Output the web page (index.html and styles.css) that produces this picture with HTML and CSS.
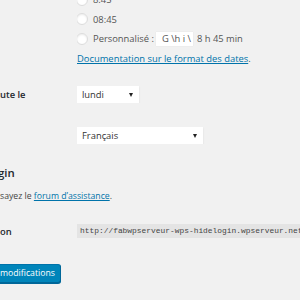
FILE: index.html
```html
<!DOCTYPE html>
<html lang="fr">
<head>
<meta charset="utf-8">
<link rel="stylesheet" href="styles.css">
</head>
<body>
<div class="page">
  <div class="row radios">
    <div class="label"></div>
    <div class="field">
      <div class="radio-line"><span class="radio"></span><span>8:45</span></div>
      <div class="radio-line"><span class="radio"></span><span>08:45</span></div>
      <div class="radio-line"><span class="radio"></span><span>Personnalisé :</span><span class="custom">G \h i \</span><span>8 h 45 min</span></div>
      <div class="radio-line"><a class="link" href="#">Documentation sur le format des dates</a>.</div>
    </div>
  </div>

  <div class="row week">
    <div class="label">ute le</div>
    <div class="field"><div class="select small"><span>lundi</span><span class="arrow"></span></div></div>
  </div>

  <div class="row lang">
    <div class="label"></div>
    <div class="field"><div class="select wide"><span>Français</span><span class="arrow"></span></div></div>
  </div>

  <h2 class="heading">gin</h2>
  <p class="desc">sayez le <a class="link" href="#">forum d’assistance</a>.</p>

  <div class="row url">
    <div class="label">on</div>
    <div class="field"><code class="code">http://fabwpserveur-wps-hidelogin.wpserveur.net</code></div>
  </div>

  <div class="submit"><span class="button">modifications</span></div>
</div>
</body>
</html>
```

FILE: styles.css
```css
html, body {
  margin: 0;
  padding: 0;
  background: #f1f1f1;
}
body {
  font-family: "Open Sans", "Noto Sans", sans-serif;
  font-size: 9.4px;
  color: #444;
  width: 300px;
  height: 300px;
  overflow: hidden;
}
.page {
  margin-top: -10px;
}
.row {
  display: grid;
  grid-template-columns: 77px 1fr;
  align-items: center;
}
.label {
  font-weight: 600;
  font-size: 9.4px;
  color: #23282d;
}
.field {
  min-width: 0;
  overflow: hidden;
}
.radio-line {
  display: flex;
  align-items: center;
  height: 19.5px;
  color: #555;
  white-space: nowrap;
}
.radio {
  width: 10px;
  height: 10px;
  border-radius: 50%;
  background: #fff;
  border: 1px solid #dcdcdc;
  box-shadow: inset 0 1px 2px rgba(0,0,0,.08);
  margin: 0 5px 0 -1px;
  flex: none;
}
.custom {
  display: inline-block;
  background: #fff;
  width: 31px;
  height: 14px;
  line-height: 14px;
  padding-left: 6px;
  margin: 0 4px 0 2px;
  overflow: hidden;
  color: #555;
  box-shadow: 0 0 1px rgba(0,0,0,.1);
}
.link {
  color: #0073aa;
  text-decoration: underline;
}
.week {
  margin-top: 18px;
}
.lang {
  margin-top: 24px;
}
.select {
  display: flex;
  align-items: center;
  justify-content: space-between;
  background: #fff;
  height: 17px;
  box-sizing: border-box;
  padding: 0 6px 0 5px;
  box-shadow: 0 1px 2px rgba(0,0,0,.09);
  color: #333;
}
.select.small { width: 62px; }
.select.wide { width: 126px; }
.arrow {
  width: 0;
  height: 0;
  border-left: 2.5px solid transparent;
  border-right: 2.5px solid transparent;
  border-top: 4px solid #222;
}
.heading {
  margin: 20px 0 0 -2px;
  font-size: 11.4px;
  font-weight: 600;
  color: #23282d;
  line-height: 18px;
}
.desc {
  margin: 7px 0 0;
  line-height: 14px;
  font-size: 8.7px;
}
.url {
  margin-top: 21px;
}
.code {
  display: block;
  background: #e4e4e4;
  font-family: "Liberation Mono", "DejaVu Sans Mono", monospace;
  font-size: 7.9px;
  line-height: 14px;
  padding: 0 3px;
  white-space: nowrap;
  color: #444;
}
.submit {
  margin-top: 26px;
}
.button {
  display: inline-block;
  background: #0085ba;
  color: #fff;
  border: 1px solid #0073aa;
  border-color: #0073aa #006799 #006799;
  box-shadow: 0 1px 0 #006799;
  border-radius: 3px;
  height: 17px;
  line-height: 17px;
  padding: 0 5px 0 8px;
  margin-left: -9px;
  font-size: 8.7px;
}
```
